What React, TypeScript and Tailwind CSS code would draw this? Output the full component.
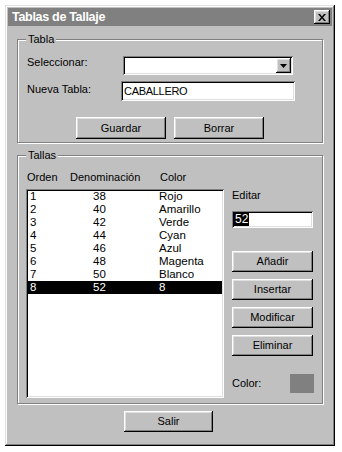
import React from "react";

const raised =
  "bg-[#c0c0c0] shadow-[inset_-1px_-1px_0_#000,inset_1px_1px_0_#fff,inset_-2px_-2px_0_#808080,inset_2px_2px_0_#dfdfdf]";
const sunken =
  "bg-white shadow-[inset_1px_1px_0_#808080,inset_-1px_-1px_0_#fff,inset_2px_2px_0_#000,inset_-2px_-2px_0_#dfdfdf]";

const rows = [
  ["1", "38", "Rojo"],
  ["2", "40", "Amarillo"],
  ["3", "42", "Verde"],
  ["4", "44", "Cyan"],
  ["5", "46", "Azul"],
  ["6", "48", "Magenta"],
  ["7", "50", "Blanco"],
  ["8", "52", "8"],
];

function Button({ label, className = "" }: { label: string; className?: string }) {
  return (
    <div className={`${raised} flex items-center justify-center ${className}`}>
      {label}
    </div>
  );
}

function Group({ title, className = "", children }: { title: string; className?: string; children: React.ReactNode }) {
  return (
    <div
      className={`relative border border-[#808080] shadow-[1px_1px_0_#fff,inset_1px_1px_0_#fff] ${className}`}
    >
      <span className="absolute -top-[8px] left-[8px] bg-[#c0c0c0] px-[2px] leading-[14px]">{title}</span>
      {children}
    </div>
  );
}

export default function App() {
  return (
    <div
      className="w-[342px] h-[452px] bg-white pt-[5px] pl-[5px] text-[11px] leading-[13px] text-black"
      style={{ fontFamily: '"Liberation Sans", Arial, sans-serif' }}
    >
      <div className="w-[330px] h-[441px] bg-[#c0c0c0] p-[3px] shadow-[inset_-1px_-1px_0_#000,inset_1px_1px_0_#dfdfdf,inset_-2px_-2px_0_#808080,inset_2px_2px_0_#fff] flex flex-col">
        {/* title bar */}
        <div className="h-[18px] bg-[#808080] flex items-center justify-between pl-[4px] pr-[2px]">
          <span className="text-white font-bold text-[12.5px] tracking-[-0.3px]">Tablas de Tallaje</span>
          <div className={`${raised} w-[16px] h-[14px] flex items-center justify-center`}>
            <svg width="8" height="7" viewBox="0 0 8 7">
              <path d="M0 0h2l2 2.5L6 0h2L5 3.5 8 7H6L4 4.5 2 7H0l3-3.5z" fill="#000" />
            </svg>
          </div>
        </div>

        {/* Tabla */}
        <Group title="Tabla" className="ml-[9px] mt-[13px] w-[306px] h-[104px] pt-[16px] pl-[9px]">
          <div className="flex items-center h-[19px]">
            <span className="w-[96px] -mt-[6px]">Seleccionar:</span>
            <div className={`${sunken} w-[170px] h-[19px] flex justify-end p-[2px]`}>
              <div className={`${raised} w-[15px] h-[15px] flex items-center justify-center`}>
                <svg width="7" height="4" viewBox="0 0 7 4">
                  <path d="M0 0h7L3.5 4z" fill="#000" />
                </svg>
              </div>
            </div>
          </div>
          <div className="flex items-center h-[20px] mt-[6px]">
            <span className="w-[94px] -mt-[4px]">Nueva Tabla:</span>
            <div className={`${sunken} w-[174px] h-[20px] flex items-center pl-[3px] text-[11px] tracking-[-0.3px]`}>
              CABALLERO
            </div>
          </div>
          <div className="flex justify-center gap-[8px] mt-[16px] pr-[9px]">
            <Button label="Guardar" className="w-[90px] h-[22px]" />
            <Button label="Borrar" className="w-[90px] h-[22px]" />
          </div>
        </Group>

        {/* Tallas */}
        <Group title="Tallas" className="ml-[9px] mt-[12px] w-[306px] h-[249px] pt-[15px] pl-[8px]">
          <div className="flex h-[13px] pl-[1px]">
            <span className="w-[43px]">Orden</span>
            <span className="w-[90px]">Denominación</span>
            <span>Color</span>
          </div>
          <div className="flex mt-[5px]">
            <div className={`${sunken} w-[198px] h-[209px] pt-[1px] px-[2px]`}>
              {rows.map((r, i) => (
                <div
                  key={i}
                  className={`flex h-[13px] leading-[13px] text-[11.5px] ${i === 7 ? "bg-black text-white" : ""}`}
                >
                  <span className="w-[65px] pl-[2px]">{r[0]}</span>
                  <span className="w-[66px]">{r[1]}</span>
                  <span>{r[2]}</span>
                </div>
              ))}
            </div>
            <div className="ml-[8px] w-[81px] flex flex-col">
              <span className="leading-[13px]">Editar</span>
              <div className={`${sunken} mt-[9px] h-[17px] flex items-center pl-[2px]`}>
                <span className="bg-black text-white text-[12px] leading-[13px] px-[1px]">52</span>
              </div>
              <Button label="Añadir" className="mt-[23px] h-[21px]" />
              <Button label="Insertar" className="mt-[7px] h-[21px]" />
              <Button label="Modificar" className="mt-[7px] h-[21px]" />
              <Button label="Eliminar" className="mt-[7px] h-[21px]" />
              <div className="flex items-center justify-between mt-[18px]">
                <span>Color:</span>
                <div className="w-[24px] h-[19px] bg-[#808080] mr-[-1px]" />
              </div>
            </div>
          </div>
        </Group>

        <div className="flex justify-center mt-[7px] pr-[3px]">
          <Button label="Salir" className="w-[89px] h-[21px]" />
        </div>
      </div>
    </div>
  );
}
